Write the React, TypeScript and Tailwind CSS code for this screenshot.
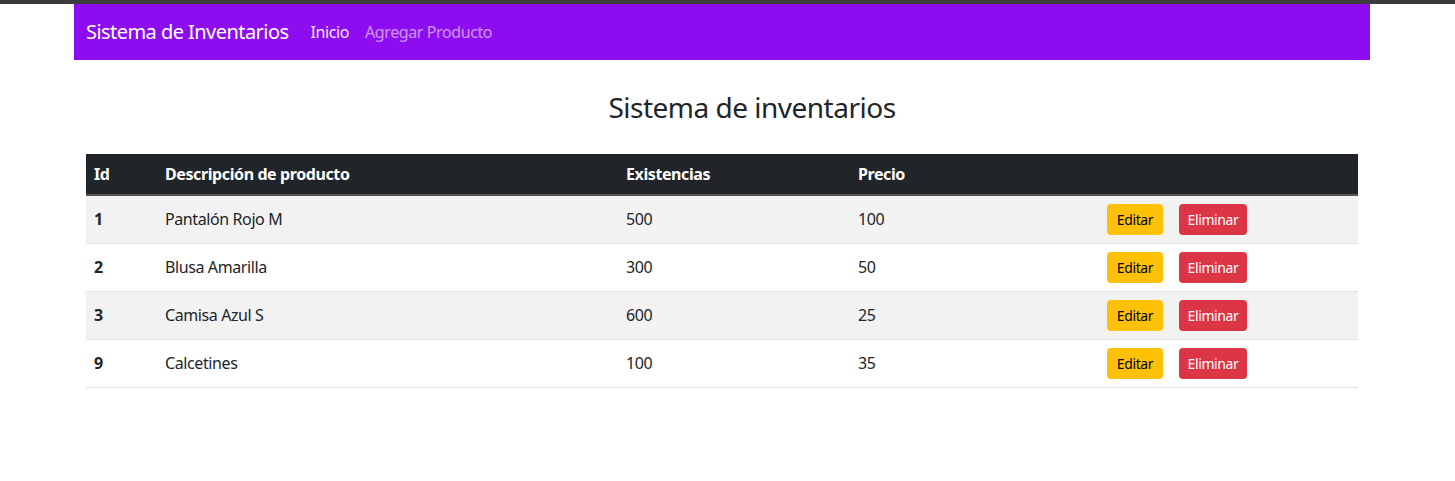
import React from "react";

const productos = [
	{ id: 1, descripcion: "Pantalón Rojo M", existencias: 500, precio: 100 },
	{ id: 2, descripcion: "Blusa Amarilla", existencias: 300, precio: 50 },
	{ id: 3, descripcion: "Camisa Azul S", existencias: 600, precio: 25 },
	{ id: 9, descripcion: "Calcetines", existencias: 100, precio: 35 },
];

export default function App() {
	return (
		<div
			className="min-h-[481px] bg-white text-[#212529] tracking-[-0.4px]"
			style={{ fontFamily: '"Noto Sans", sans-serif' }}
		>
			<div className="h-[4px] bg-[#3c3c3c]" />
			<div className="ml-[62px] w-[1320px] px-3">
				<nav className="flex h-[56px] items-center bg-[#8e0cf0] px-3">
					<a className="mr-[14px] text-[20px] leading-[30px] tracking-[-0.55px] text-white">
						Sistema de Inventarios
					</a>
					<a className="px-2 text-[16px] text-white/90">Inicio</a>
					<a className="px-2 text-[16px] text-white/55">Agregar Producto</a>
				</nav>
			</div>
			<div className="ml-[62px] w-[1320px] px-3">
				<div className="px-3">
					<h3 className="mt-[28px] mb-[28px] pl-[60px] text-center text-[28px] leading-[38px] font-normal tracking-[-0.5px]">
						Sistema de inventarios
					</h3>
					<table className="w-full border-collapse text-[16px]">
						<thead>
							<tr className="h-[41px] bg-[#212529] text-left text-white border-b-2 border-[#555]">
								<th className="w-[71px] px-2 font-bold">Id</th>
								<th className="w-[461px] px-2 font-bold">Descripción de producto</th>
								<th className="w-[232px] px-2 font-bold">Existencias</th>
								<th className="w-[249px] px-2 font-bold">Precio</th>
								<th className="px-2" />
							</tr>
						</thead>
						<tbody>
							{productos.map((p, i) => (
								<tr
									key={p.id}
									className={`h-[48px] border-b border-[#dee2e6] ${
										i % 2 === 0 ? "bg-[#f2f2f2]" : "bg-white"
									}`}
								>
									<td className="px-2 font-bold">{p.id}</td>
									<td className="px-2">{p.descripcion}</td>
									<td className="px-2">{p.existencias}</td>
									<td className="px-2">{p.precio}</td>
									<td className="px-2">
										<div className="flex gap-4">
											<button className="h-[31px] w-[56px] rounded-[4px] bg-[#ffc107] text-[14px] text-[#000]">
												Editar
											</button>
											<button className="h-[31px] w-[68px] rounded-[4px] bg-[#dc3545] text-[14px] text-white">
												Eliminar
											</button>
										</div>
									</td>
								</tr>
							))}
						</tbody>
					</table>
				</div>
			</div>
		</div>
	);
}
